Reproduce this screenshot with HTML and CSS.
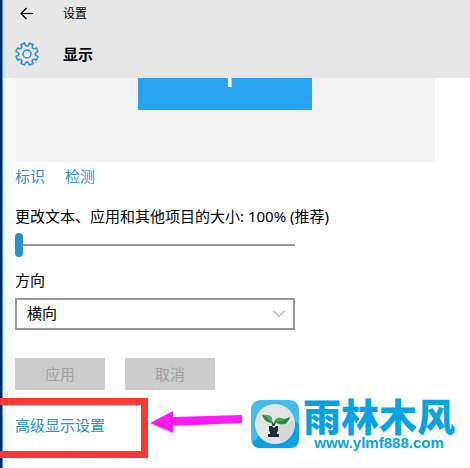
FILE: index.html
```html
<!DOCTYPE html>
<html lang="zh-CN">
<head>
    <meta charset="UTF-8">
    <title>设置</title>
    <link rel="stylesheet" href="styles.css">
</head>
<body>
    <div class="window">
        <header class="header">
            <div class="titlebar">
                <button class="back" type="button" aria-label="返回">
                    <svg width="14" height="14" viewBox="0 0 14 14"><path d="M1 6.5H13M6.5 1L1 6.5L6.5 12" /></svg>
                </button>
                <span>设置</span>
            </div>
            <div class="heading">
                <svg class="gear" width="24" height="24" viewBox="-12 -12 24 24">
                    <defs>
                        <path id="tooth" d="M-4.25 -10.25L-2.4 -11L-1.6 -8.9Q0 -7.4 1.6 -8.9L2.4 -11L4.25 -10.25" />
                    </defs>
                    <use href="#tooth" />
                    <use href="#tooth" transform="rotate(45)" />
                    <use href="#tooth" transform="rotate(90)" />
                    <use href="#tooth" transform="rotate(135)" />
                    <use href="#tooth" transform="rotate(180)" />
                    <use href="#tooth" transform="rotate(225)" />
                    <use href="#tooth" transform="rotate(270)" />
                    <use href="#tooth" transform="rotate(315)" />
                    <circle r="4" />
                </svg>
                <h1>显示</h1>
            </div>
        </header>
        <main class="content">
            <div class="preview">
                <div class="screen"><i class="digit"></i></div>
            </div>
            <div class="links">
                <a href="#">标识</a>
                <a href="#">检测</a>
            </div>
            <label class="scale-label" for="scale">更改文本、应用和其他项目的大小: 100% (推荐)</label>
            <input class="slider" id="scale" type="range" min="0" max="3" value="0">
            <label class="dir-label" for="dir">方向</label>
            <div class="select">
                <select id="dir">
                    <option>横向</option>
                    <option>纵向</option>
                </select>
                <svg width="12" height="8" viewBox="0 0 12 8"><path d="M0.5 1L6 6.5L11.5 1" /></svg>
            </div>
            <div class="buttons">
                <button type="button" disabled>应用</button>
                <button type="button" disabled>取消</button>
            </div>
            <div class="advanced">
                <a href="#">高级显示设置</a>
            </div>
        </main>
    </div>
    <div class="mark"></div>
    <svg class="arrow" width="92" height="24" viewBox="0 0 92 24">
        <path d="M0 12L23 0V6L92 4V12L23 15V22Z" />
    </svg>
    <div class="brand">
        <svg width="48" height="48" viewBox="0 0 48 48">
            <rect width="48" height="48" rx="9" fill="#45bdec" />
            <path d="M44 21L48 25V39Q48 48 39 48H9Q3 48 1 43L8 36Z" fill="#05a3e3" />
            <circle cx="24" cy="24" r="20" fill="#e3e4e5" />
            <path d="M43.5 21A20 20 0 0 1 30 43L26 36L28 26Z" fill="#d3d7d9" />
            <path d="M22 26Q22 22 18 20M23 26Q23 22 27 21" fill="none" stroke="#2d4632" stroke-width="1.5" />
            <path d="M11 15Q18 14 21 18L21 23Q14 23 11 15Z" fill="#298a3a" />
            <path d="M11 15Q17 16 21 23L21 18Q18 14 11 15Z" fill="#57b64b" />
            <path d="M23 22Q25 17 30 18Q34 20 39 17Q36 26 28 24Z" fill="#3fa744" />
            <path d="M23 22Q31 22 39 17Q36 26 28 24Z" fill="#27893a" />
            <path d="M18 26H21L23 28L25 26H27V31L26 32V34H28V37H17V34H19V32L18 31Z" fill="#222b34" />
        </svg>
        <div class="brand-text">
            <strong>雨林木风</strong>
            <span>www.ylmf888.com</span>
        </div>
    </div>
</body>
</html>
```
FILE: styles.css
```css
* {
    margin: 0;
    padding: 0;
    box-sizing: border-box;
}
body {
    position: relative;
    min-height: 100vh;
    padding-left: 2px;
    background-color: #00285a;
    font: 15px/20px "Noto Sans", "Noto Sans CJK SC", sans-serif;
    color: #000;
}
svg {
    display: block;
}
a {
    color: #2a8fcf;
    text-decoration: none;
}
.window {
    min-height: 100vh;
    border-left: 1px solid #35a5ee;
    background-color: #fff;
}
.header {
    padding-left: 12px;
    background-color: #e6e6e6;
}
.titlebar,
.heading {
    display: flex;
    align-items: center;
    gap: 24px;
}
.titlebar {
    height: 28px;
    font-size: 12px;
}
.heading {
    height: 50px;
    padding-top: 2px;
}
.heading h1 {
    font-size: 15px;
}
.back {
    display: flex;
    justify-content: center;
    width: 24px;
    border: 0;
    background: none;
}
.back path {
    fill: none;
    stroke: #000;
    stroke-width: 1.2;
}
.gear {
    fill: none;
    stroke: #2a8fcf;
    stroke-width: 1.5;
    stroke-linejoin: round;
}
.content {
    display: flex;
    flex-direction: column;
    align-items: flex-start;
    padding: 0 35px 0 12px;
}
.preview {
    align-self: stretch;
    height: 84px;
    background-color: #f3f3f3;
}
.screen {
    width: 174px;
    height: 32px;
    margin: 0 auto;
    padding-left: 90px;
    background-color: #27a4f2;
}
.digit {
    display: block;
    width: 4px;
    height: 9px;
    border-right: 1px solid #a9d9fa;
    background-color: #fff;
}
.links {
    display: flex;
    gap: 20px;
    margin-top: 4px;
}
.scale-label {
    margin-top: 20px;
}
.slider {
    width: 280px;
    height: 24px;
    margin-top: 7px;
    appearance: none;
    background: linear-gradient(#999, #999) center / 100% 2px no-repeat;
}
.slider::-webkit-slider-thumb {
    appearance: none;
    width: 8px;
    height: 24px;
    border-radius: 4px;
    background-color: #2a8fcf;
}
.dir-label {
    margin-top: 13px;
}
.select {
    position: relative;
    width: 280px;
    margin-top: 8px;
}
.select select {
    display: block;
    width: 100%;
    height: 32px;
    padding: 0 10px 2px;
    border: 2px solid #999;
    border-radius: 0;
    appearance: none;
    background-color: #fff;
    font: inherit;
    color: #000;
}
.select svg {
    position: absolute;
    right: 10px;
    top: 12px;
    fill: none;
    stroke: #777;
    pointer-events: none;
}
.buttons {
    display: flex;
    gap: 20px;
    margin-top: 28px;
}
.buttons button {
    width: 90px;
    height: 32px;
    border: 0;
    background-color: #ccc;
    font: inherit;
    color: #a0a0a0;
}
.advanced {
    margin-top: 25px;
}
/* annotations over the window */
.mark {
    position: absolute;
    left: -7px;
    top: 398px;
    width: 155px;
    height: 60px;
    border: 7px solid #fd3736;
}
.arrow {
    position: absolute;
    left: 150px;
    top: 411px;
    fill: #fb1cf6;
}
.brand {
    position: absolute;
    left: 251px;
    top: 400px;
    display: flex;
    gap: 4px;
    color: #05a3e3;
}
.brand-text {
    display: flex;
    flex-direction: column;
    align-items: center;
    gap: 5px;
}
.brand strong {
    font: 900 38px/30px "Noto Sans CJK SC", sans-serif;
}
.brand span {
    font: bold 15px/16px "Liberation Sans", sans-serif;
}
```
